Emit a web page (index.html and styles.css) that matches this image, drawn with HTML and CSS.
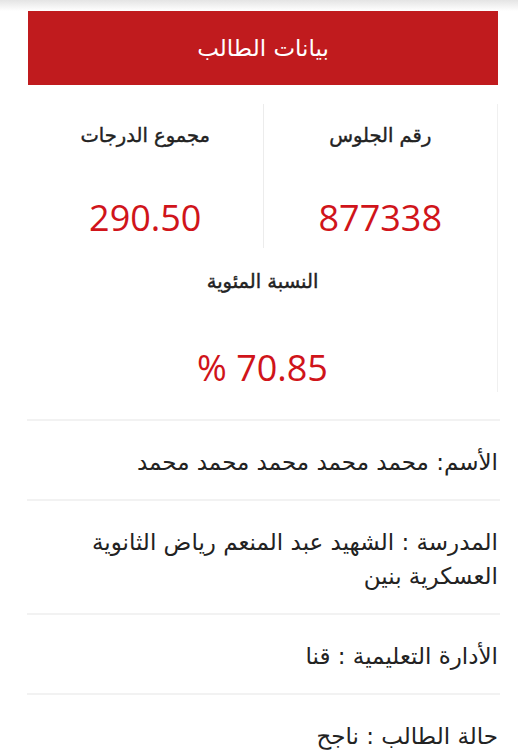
FILE: index.html
```html
<!DOCTYPE html>
<html lang="ar" dir="rtl">
<head>
  <meta charset="UTF-8" />
  <meta name="viewport" content="width=device-width, initial-scale=1" />
  <title>بيانات الطالب</title>
  <link rel="stylesheet" href="styles.css">
</head>
<body>

  <div class="top-shade"></div>

  <div class="container">
    <div class="header">بيانات الطالب</div>

    <div class="stats">
      <div class="stat seat">
        <div class="label">رقم الجلوس</div>
        <div class="value">877338</div>
      </div>
      <div class="stat">
        <div class="label">مجموع الدرجات</div>
        <div class="value">290.50</div>
      </div>
      <div class="stat wide">
        <div class="label">النسبة المئوية</div>
        <div class="value" dir="ltr">% 70.85</div>
      </div>
    </div>

    <div class="info">
      <div class="row">الأسم: محمد محمد محمد محمد محمد</div>
      <div class="row">المدرسة : الشهيد عبد المنعم رياض الثانوية العسكرية بنين</div>
      <div class="row">الأدارة التعليمية : قنا</div>
      <div class="row">حالة الطالب : ناجح</div>
    </div>
  </div>

</body>
</html>
```

FILE: styles.css
```css
body {
  margin: 0;
  padding: 0;
  background: #ffffff;
  color: #222;
  font-family: "DejaVu Sans", sans-serif;
}

.top-shade {
  height: 11px;
  background: linear-gradient(#e4e4e4, #ffffff);
}

.container {
  margin: 0 20px 0 28px;
}

.header {
  background-color: #c01b1e;
  color: #fff;
  height: 74px;
  display: flex;
  align-items: center;
  justify-content: center;
  font-size: 23px;
}

.stats {
  margin-top: 19px;
  margin-bottom: 27px;
  display: grid;
  grid-template-columns: 1fr 1fr;
  border-right: 1px solid #f0f0f0;
}

.stat {
  text-align: center;
  padding-top: 22px;
}

.stat.seat {
  border-left: 1px solid #ececec;
  padding-bottom: 6px;
}

.stat.wide {
  grid-column: 1 / span 2;
  padding-top: 24px;
}

.label {
  font-size: 19.5px;
  line-height: 20px;
  color: #222;
  -webkit-text-stroke: 0.4px #222;
}

.value {
  font-family: "Open Sans", sans-serif;
  font-size: 36px;
  line-height: 49px;
  color: #d0141a;
  margin-top: 47px;
}

.stat.wide .value {
  margin-top: 51px;
}

.info {
  margin-right: -2px;
  margin-left: -1px;
}

.row {
  border-top: 2px solid #f2f2f2;
  padding: 24px 2px 20px 0;
  font-size: 23px;
  line-height: 34px;
  color: #222;
}
```
